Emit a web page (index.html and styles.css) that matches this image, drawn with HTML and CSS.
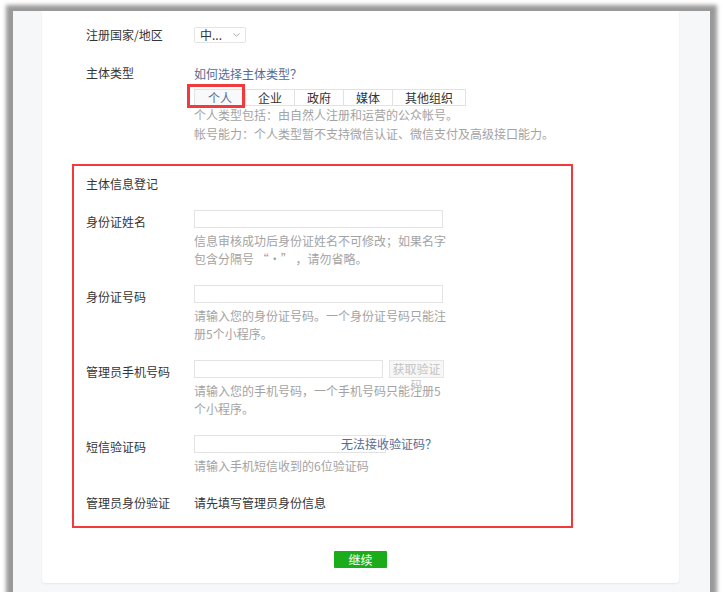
FILE: index.html
```html
<!DOCTYPE html>
<html>
  <head>
    <meta charset="utf-8">
    <meta name="viewport" content="width=device-width, initial-scale=1.0">
    <link rel="stylesheet" href="styles.css">
  </head>
  <body>
    <div class="window">
      <div class="card">
        <div class="row row-country">
          <div class="label">注册国家/地区</div>
          <div class="select">
            <span>中...</span>
            <svg width="7" height="4" viewBox="0 0 7 4"><path d="M0.5 0.5 L3.5 3.2 L6.5 0.5" fill="none" stroke="#a0a0a0" stroke-width="0.9"/></svg>
          </div>
        </div>

        <div class="row row-type">
          <div class="label">主体类型</div>
          <div class="field">
            <a class="link" href="#">如何选择主体类型？</a>
            <div class="tabs">
              <span class="tab selected">个人</span>
              <span class="tab">企业</span>
              <span class="tab">政府</span>
              <span class="tab">媒体</span>
              <span class="tab">其他组织</span>
              <span class="mark"></span>
            </div>
            <div class="hint wide">个人类型包括：由自然人注册和运营的公众帐号。</div>
            <div class="hint wide">帐号能力：个人类型暂不支持微信认证、微信支付及高级接口能力。</div>
          </div>
        </div>

        <div class="info">
          <div class="info-title">主体信息登记</div>

          <div class="row entry">
            <div class="label">身份证姓名</div>
            <div class="field">
              <div class="input"></div>
              <div class="hint">信息审核成功后身份证姓名不可修改；如果名字<br>包含分隔号 “·” ，请勿省略。</div>
            </div>
          </div>

          <div class="row entry">
            <div class="label">身份证号码</div>
            <div class="field">
              <div class="input"></div>
              <div class="hint">请输入您的身份证号码。一个身份证号码只能注<br>册5个小程序。</div>
            </div>
          </div>

          <div class="row entry">
            <div class="label">管理员手机号码</div>
            <div class="field">
              <div class="input-line">
                <div class="input phone"></div>
                <div class="get-code">获取验证码</div>
              </div>
              <div class="hint">请输入您的手机号码，一个手机号码只能注册5<br>个小程序。</div>
            </div>
          </div>

          <div class="row entry">
            <div class="label">短信验证码</div>
            <div class="field">
              <div class="input-line">
                <div class="input sms"></div>
                <a class="link no-code" href="#">无法接收验证码？</a>
              </div>
              <div class="hint">请输入手机短信收到的6位验证码</div>
            </div>
          </div>

          <div class="row entry last">
            <div class="label">管理员身份验证</div>
            <div class="value">请先填写管理员身份信息</div>
          </div>
        </div>

        <div class="actions">
          <button class="btn-next">继续</button>
        </div>
      </div>
    </div>
  </body>
</html>
```

FILE: styles.css
```css
/* page frame with the screenshot shadow */
body {
  margin: 0;
  background: #fff;
  font-family: "Noto Sans CJK SC", "Microsoft YaHei", sans-serif;
  font-size: 12px;
  color: #353535;
}
.window {
  margin: 11px 0 0 13px;
  width: 697px;
  height: 581px;
  box-sizing: border-box;
  padding: 0 31px 9px 29px;
  background: #f6f7f9;
  box-shadow: 0 1px 4px 7px rgba(0, 0, 0, 0.4);
  overflow: hidden;
}
.card {
  height: 100%;
  box-sizing: border-box;
  background: #fff;
  border-radius: 0 0 4px 4px;
  box-shadow: 0 1px 2px rgba(0, 0, 0, 0.07);
  padding: 16px 0 0 44px;
}

/* rows */
.row {
  display: flex;
  align-items: flex-start;
}
.label {
  width: 108px;
  flex-shrink: 0;
  line-height: 16px;
}
.field {
  width: 252px;
}
.link {
  color: #576b95;
  text-decoration: none;
  line-height: 16px;
}

.row-country {
  align-items: center;
}
.select {
  width: 52px;
  height: 16px;
  box-sizing: border-box;
  border: 1px solid #e4e4e4;
  border-radius: 2px;
  display: flex;
  align-items: center;
  justify-content: space-between;
  padding: 0 5px 0 5px;
  line-height: 14px;
  color: #333;
}

.row-type {
  margin-top: 22px;
}
.row-type .field {
  width: 400px;
}
.tabs {
  position: relative;
  display: flex;
  margin-top: 7px;
}
.tab {
  border: 1px solid #e2e2e2;
  border-left: none;
  padding: 0 12px;
  line-height: 15px;
  color: #333;
  background: #fff;
}
.tab:first-child {
  border-left: 1px solid #e2e2e2;
}
.tab.selected {
  color: #576b95;
  background: #f8f9fb;
  padding: 0 13px;
}
.mark {
  position: absolute;
  left: -7px;
  top: -5px;
  width: 58px;
  height: 24px;
  box-sizing: border-box;
  border: 3px solid #f2393b;
}
.hint {
  color: #a3a3a3;
  line-height: 18px;
  margin-top: 4px;
}
.hint.wide {
  margin-top: 0;
}
.hint.wide + .hint.wide {
  margin-top: 1px;
}

/* highlighted block */
.info {
  margin: 21px 0 0 -14px;
  width: 501px;
  box-sizing: border-box;
  border: 2px solid #f2393b;
  padding: 10px 0 15px 12px;
}
.info-title {
  line-height: 16px;
}
.entry {
  margin-top: 17px;
}
.info-title + .entry {
  margin-top: 18px;
}
.entry .label {
  padding-top: 4px;
}
.entry.last {
  margin-top: 20px;
}
.entry.last .label {
  padding-top: 0;
}
.value {
  line-height: 16px;
  color: #353535;
}
.input {
  width: 249px;
  height: 18px;
  box-sizing: border-box;
  border: 1px solid #e3e3e3;
  background: #fff;
}
.input-line {
  position: relative;
  display: flex;
}
.input.phone {
  width: 189px;
}
.input.sms {
  width: 192px;
}
.get-code {
  margin-left: 6px;
  width: 55px;
  height: 18px;
  box-sizing: border-box;
  border: 1px solid #e6e6e6;
  background: #f7f7f7;
  color: #c4c4c4;
  text-align: center;
  line-height: 16px;
}
.no-code {
  position: absolute;
  left: 147px;
  top: 1px;
}

.actions {
  margin-top: 23px;
  padding-right: 44px;
  text-align: center;
}
.btn-next {
  width: 53px;
  height: 17px;
  border: none;
  border-radius: 1px;
  background: #1aad19;
  color: #fff;
  font-family: inherit;
  font-size: 12px;
  line-height: 17px;
  padding: 0;
}
```
